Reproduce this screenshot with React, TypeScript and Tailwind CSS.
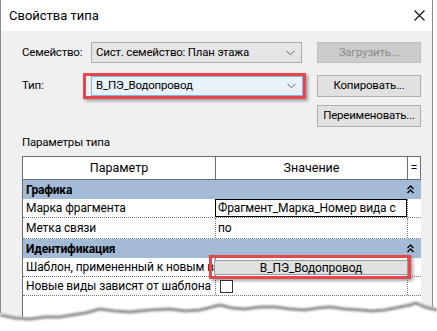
import React from "react";

const F = { fontFamily: 'Roboto, "Noto Sans", sans-serif' };

function Chevron() {
  return (
    <svg width="9" height="6" viewBox="0 0 9 6" className="shrink-0">
      <path d="M0.5 0.8 L4.5 4.8 L8.5 0.8" fill="none" stroke="#606060" strokeWidth="1" />
    </svg>
  );
}

function DoubleUp() {
  return (
    <svg width="7" height="9" viewBox="0 0 7 9">
      <path d="M0.5 4 L3.5 1 L6.5 4 M0.5 8 L3.5 5 L6.5 8" fill="none" stroke="#000" strokeWidth="1.4" />
    </svg>
  );
}

function GroupRow({ title }: { title: string }) {
  return (
    <div className="flex h-[19px] items-center bg-[#a3bbd6] pl-[3px] pr-[7px]">
      <span className="flex-1 text-[12px] font-bold tracking-[-0.2px] text-black">{title}</span>
      <DoubleUp />
    </div>
  );
}

function DataRow({ label, tall, children }: { label: string; tall?: boolean; children?: React.ReactNode }) {
  return (
    <div className={`grid grid-cols-[193px_192px_13px] border-b border-dotted border-[#777] ${tall ? "h-[21px]" : "h-[19px]"}`}>
      <div className="flex items-center overflow-hidden whitespace-nowrap border-r border-dotted border-[#777] pl-[3px] text-[12px] tracking-[-0.1px] text-black">
        {label}
      </div>
      <div className="relative flex items-center border-r border-dotted border-[#777] text-[12px] tracking-[-0.1px] text-black">
        {children}
      </div>
      <div />
    </div>
  );
}

const T = "text-[11.5px] tracking-[-0.2px]";

export default function App() {
  return (
    <div className="relative h-[331px] w-[437px] overflow-hidden bg-white" style={F}>
      <div className="flex h-[331px] w-[433px] flex-col border-x border-[#8a8a8a] bg-[#f0f0f0]">
        {/* title bar */}
        <div className="flex h-[31px] shrink-0 items-center justify-between bg-white pl-[8px] pr-[6px]">
          <span className="text-[13px] text-black">Свойства типа</span>
          <svg width="11" height="11" viewBox="0 0 11 11" className="mr-[1px]">
            <path d="M0.5 0.5 L10.5 10.5 M10.5 0.5 L0.5 10.5" stroke="#111" strokeWidth="1.1" />
          </svg>
        </div>

        <div className="flex flex-1 flex-col pl-[21px] pr-[11px] pt-[11px]">
          {/* row 1 */}
          <div className="flex h-[21px] items-center">
            <span className={`w-[69px] text-black ${T}`}>Семейство:</span>
            <div className="flex h-[21px] w-[211px] items-center justify-between border border-[#adadad] bg-[#e5e5e5] pl-[4px] pr-[6px]">
              <span className={`text-black ${T}`}>Сист. семейство: План этажа</span>
              <Chevron />
            </div>
            <div className={`ml-auto flex h-[21px] w-[104px] items-center justify-center border border-[#bfbfbf] bg-[#cccccc] text-[#8a8a8a] ${T}`}>
              Загрузить...
            </div>
          </div>

          {/* row 2 */}
          <div className="mt-[12px] flex h-[22px] items-center">
            <span className={`w-[69px] text-black ${T}`}>Тип:</span>
            <div className="relative flex h-[20px] w-[212px] items-center justify-between border border-[#7eb4ea] bg-[#e8f2fb] pl-[4px] pr-[6px]">
              <span className={`text-black ${T}`}>В_ПЭ_Водопровод</span>
              <Chevron />
              <div className="absolute -bottom-[4px] -left-[9px] -right-[4px] -top-[4px] border-[3px] border-[#e5474b] shadow-[2px_2px_3px_rgba(0,0,0,0.35)]" />
            </div>
            <div className={`ml-auto flex h-[22px] w-[104px] items-center justify-center border border-[#adadad] bg-[#e1e1e1] text-black ${T}`}>
              Копировать...
            </div>
          </div>

          {/* row 3 */}
          <div className="mt-[8px] flex h-[22px] justify-end">
            <div className={`flex h-[22px] w-[104px] items-center justify-center border border-[#adadad] bg-[#e1e1e1] text-black ${T}`}>
              Переименовать...
            </div>
          </div>

          <div className={`mt-[7px] h-[16px] leading-[16px] text-black ${T}`}>Параметры типа</div>

          {/* table */}
          <div className="mt-[6px] w-[399px] flex-1 border-l border-t border-[#6d6d6d] bg-white">
            <div className="grid h-[23px] grid-cols-[193px_192px_13px] border-b border-[#6d6d6d]">
              <div className="flex items-center justify-center border-r border-[#6d6d6d] text-[12.5px] text-black">Параметр</div>
              <div className="flex items-center justify-center border-r border-[#6d6d6d] text-[12.5px] text-black">Значение</div>
              <div className="flex items-center justify-center border-r border-[#6d6d6d] text-[12.5px] text-black">=</div>
            </div>
            <GroupRow title="Графика" />
            <DataRow label="Марка фрагмента">
              <div className="absolute inset-0 -left-[1px] flex items-center overflow-hidden whitespace-nowrap border border-black bg-white pl-[2px]">
                Фрагмент_Марка_Номер вида с
              </div>
            </DataRow>
            <DataRow label="Метка связи" tall>
              <span className="pl-[2px]">по</span>
            </DataRow>
            <GroupRow title="Идентификация" />
            <DataRow label="Шаблон, примененный к новым видам">
              <div className="absolute -left-[2px] -right-[1px] bottom-[1px] top-[2px] flex items-center justify-center border border-[#9a9a9a] bg-[#e1e1e1]">
                В_ПЭ_Водопровод
              </div>
              <div className="absolute -bottom-[3px] -left-[7px] -right-[4px] -top-[3px] border-[3px] border-[#e5474b] shadow-[2px_2px_3px_rgba(0,0,0,0.35)]" />
            </DataRow>
            <DataRow label="Новые виды зависят от шаблона">
              <div className="ml-[4px] h-[13px] w-[13px] border border-[#333] bg-white" />
            </DataRow>
          </div>
        </div>
      </div>

      {/* torn paper edge */}
      <svg className="absolute bottom-0 left-0" width="437" height="40" viewBox="0 291 437 40">
        <defs>
          <filter id="blur" x="-5%" y="-50%" width="110%" height="200%">
            <feGaussianBlur stdDeviation="1.3" />
          </filter>
        </defs>
        <polygon
          fill="#ffffff"
          points="0,313 15,316 30,317 45,315 60,315 72,313 85,311 100,307 115,309 130,310 150,308 170,307 185,309 200,308 212,305 220,303 232,306 245,307 260,305 275,305 290,307 305,308 318,306 330,305 345,307 360,308 372,309 385,308 400,305 410,303 416,301 425,305 437,308 437,331 0,331"
        />
        <polyline
          filter="url(#blur)"
          fill="none"
          stroke="#8a8a8a"
          strokeWidth="3"
          points="0,315 15,318 30,319 45,317 60,317 72,315 85,313 100,309 115,311 130,312 150,310 170,309 185,311 200,310 212,307 220,305 232,308 245,309 260,307 275,307 290,309 305,310 318,308 330,307 345,309 360,310 372,311 385,310 400,307 410,305 416,303 425,307 437,310"
        />
      </svg>
    </div>
  );
}
